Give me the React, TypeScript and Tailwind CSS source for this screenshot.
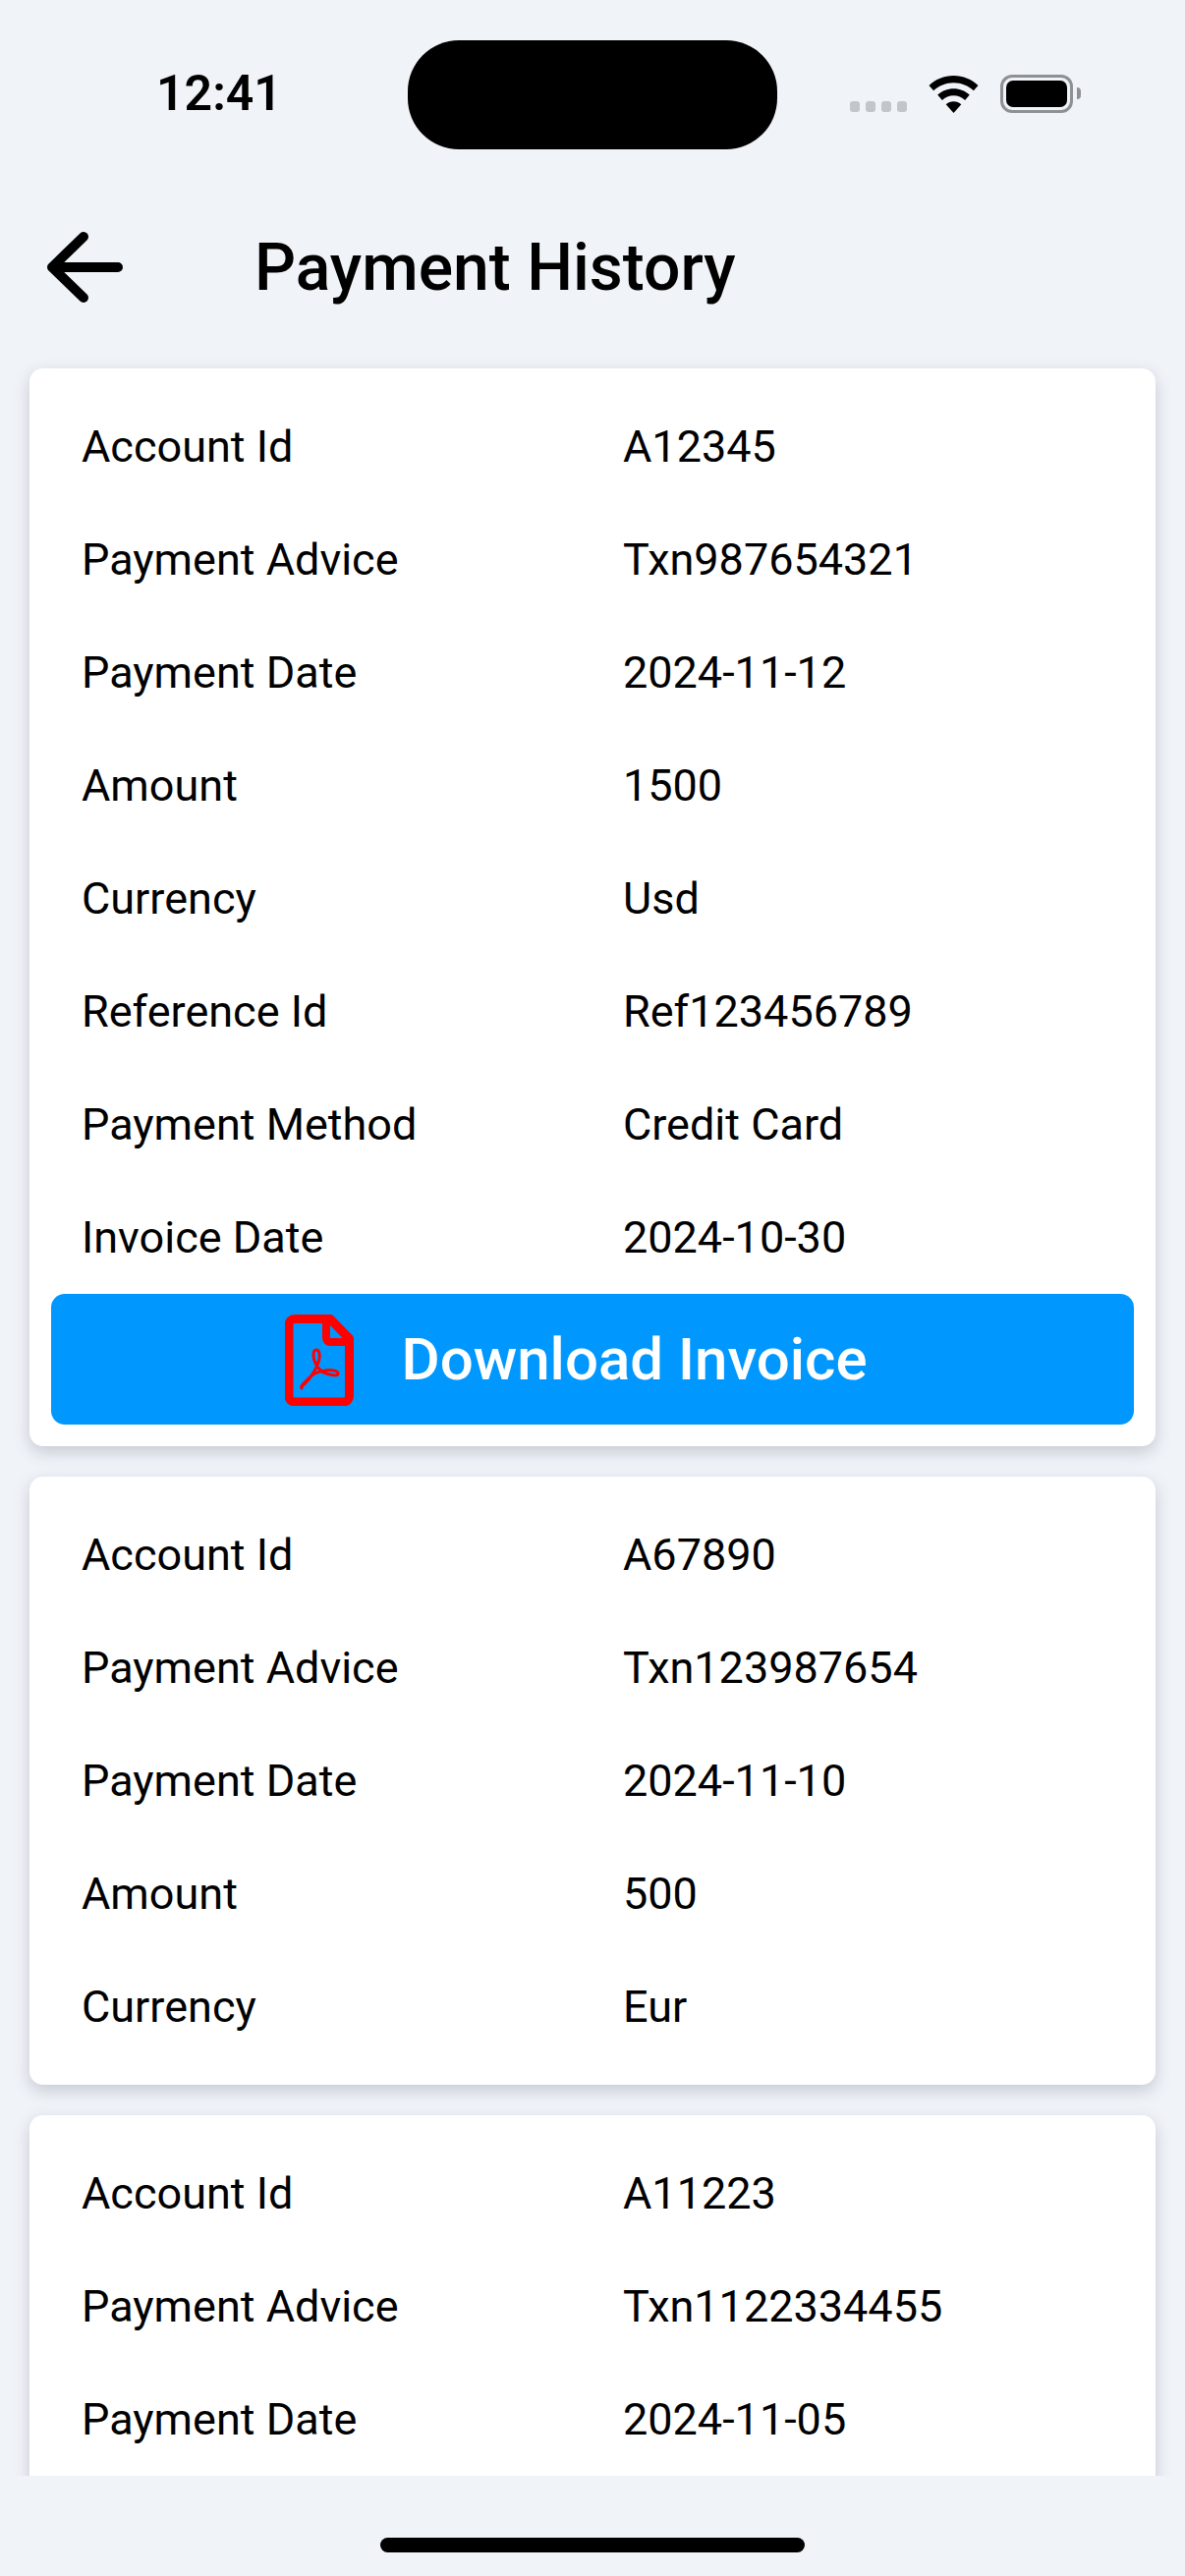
interface Payment {
  rows: [string, string][]
  hasInvoice?: boolean
}

const payments: Payment[] = [
  {
    hasInvoice: true,
    rows: [
      ['Account Id', 'A12345'],
      ['Payment Advice', 'Txn987654321'],
      ['Payment Date', '2024-11-12'],
      ['Amount', '1500'],
      ['Currency', 'Usd'],
      ['Reference Id', 'Ref123456789'],
      ['Payment Method', 'Credit Card'],
      ['Invoice Date', '2024-10-30'],
    ],
  },
  {
    rows: [
      ['Account Id', 'A67890'],
      ['Payment Advice', 'Txn123987654'],
      ['Payment Date', '2024-11-10'],
      ['Amount', '500'],
      ['Currency', 'Eur'],
    ],
  },
  {
    rows: [
      ['Account Id', 'A11223'],
      ['Payment Advice', 'Txn1122334455'],
      ['Payment Date', '2024-11-05'],
    ],
  },
]

export default function App() {
  return (
    <div className="relative flex h-[2622px] w-[1206px] flex-col overflow-hidden bg-[#f0f3f8] font-['Roboto',sans-serif] text-black">
      <StatusBar />

      {/* 헤더 */}
      <div className="flex h-[164px] shrink-0 items-center pl-[46px]">
        <BackIcon />
        <h1 className="ml-[127px] mt-[2px] text-[66px] font-medium leading-none">Payment History</h1>
      </div>

      {/* 결제 목록 */}
      <div className="flex min-h-0 flex-1 flex-col gap-[31px] overflow-hidden px-[30px] pt-[21px]">
        {payments.map((payment) => (
          <PaymentCard key={payment.rows[0][1]} payment={payment} />
        ))}
      </div>

      <div className="flex h-[102px] shrink-0 justify-center pt-[63px]">
        <div className="h-[15px] w-[432px] rounded-full bg-black" />
      </div>
    </div>
  )
}

function PaymentCard({ payment }: { payment: Payment }) {
  return (
    <div className="shrink-0 rounded-[14px] bg-white px-[22px] py-[22px] shadow-[0_6px_16px_rgba(70,85,100,0.25)]">
      {payment.rows.map(([label, value]) => (
        <div key={label} className="flex h-[115px] items-center pl-[31px] text-[45px]">
          <span className="w-[551px]">{label}</span>
          <span>{value}</span>
        </div>
      ))}
      {payment.hasInvoice && (
        <button className="flex h-[133px] w-full items-center justify-center gap-[48px] rounded-[14px] bg-[#0098ff] pr-[33px] text-[60px] font-medium text-white">
          <PdfIcon />
          Download Invoice
        </button>
      )}
    </div>
  )
}

function StatusBar() {
  return (
    <div className="relative flex h-[190px] shrink-0 items-center justify-between pl-[159px] pr-[106px]">
      <span className="text-[50px] font-semibold leading-none">12:41</span>
      <div className="absolute left-[415px] top-[41px] h-[111px] w-[376px] rounded-[52px] bg-black" />
      <div className="flex items-end">
        <div className="mb-[1px] flex gap-[6px]">
          {[0, 1, 2, 3].map((dot) => (
            <div key={dot} className="h-[11px] w-[10px] rounded-[3px] bg-[#c2c6ca]" />
          ))}
        </div>
        <svg className="ml-[22px] h-[38px] w-[51px]" viewBox="0 0 51 38" fill="#000">
          <path d="M25.5 0C15.8 0 7 3.8 0.5 10l4.6 5.2C10.4 10.2 17.6 7.2 25.5 7.2S40.600 10.200 45.900 15.200L50.500 10C44 3.800 35.200 0 25.500 0Z" />
          <path d="M25.5 13.200c-6.300 0-12 2.400-16.300 6.400l4.700 5.300c3-2.800 7.100-4.600 11.600-4.600s8.600 1.800 11.600 4.600l4.700-5.300c-4.300-4-10-6.400-16.300-6.400Z" />
          <path d="M25.500 26.300c-3 0-5.700 1.100-7.800 3L25.500 38l7.800-8.700c-2.100-1.900-4.800-3-7.800-3Z" />
        </svg>
        <div className="ml-[22px] flex items-center">
          <div className="h-[39px] w-[74px] rounded-[12px] border-[3px] border-[#8e9094] p-[3px]">
            <div className="h-full w-full rounded-[7px] bg-black" />
          </div>
          <div className="ml-[4px] h-[12px] w-[4px] rounded-r-full bg-[#8e9094]" />
        </div>
      </div>
    </div>
  )
}

function BackIcon() {
  return (
    <svg className="h-[84px] w-[86px] shrink-0" viewBox="0 0 86 84" fill="none" stroke="#000" strokeWidth={10} strokeLinecap="round" strokeLinejoin="round">
      <path d="M7 42h67M39 11 7 42l32 31" />
    </svg>
  )
}

function PdfIcon() {
  return (
    <svg className="mt-[1px] h-[93px] w-[70px] shrink-0" viewBox="0 0 70 93" fill="none" stroke="#ff0000" strokeLinejoin="round">
      <path strokeWidth={9} d="M10 4.500h36l19.500 20v58.500a6 6 0 0 1-6 6H10a6 6 0 0 1-6-6V10.500a6 6 0 0 1 6-6Z" />
      <path strokeWidth={8} d="M42 4v20a4 4 0 0 0 4 4h20" />
      <path strokeWidth={3} d="M17 73C24 68 33 55 35 45C36 39 34 36 32 36C29 36 28 41 30 47C32 53 37 59 42 60C48 62 54 63 54 60C54 57 47 56 41 57C33 58 27 61 23 66C19 70 15 74 17 75Z" />
    </svg>
  )
}
